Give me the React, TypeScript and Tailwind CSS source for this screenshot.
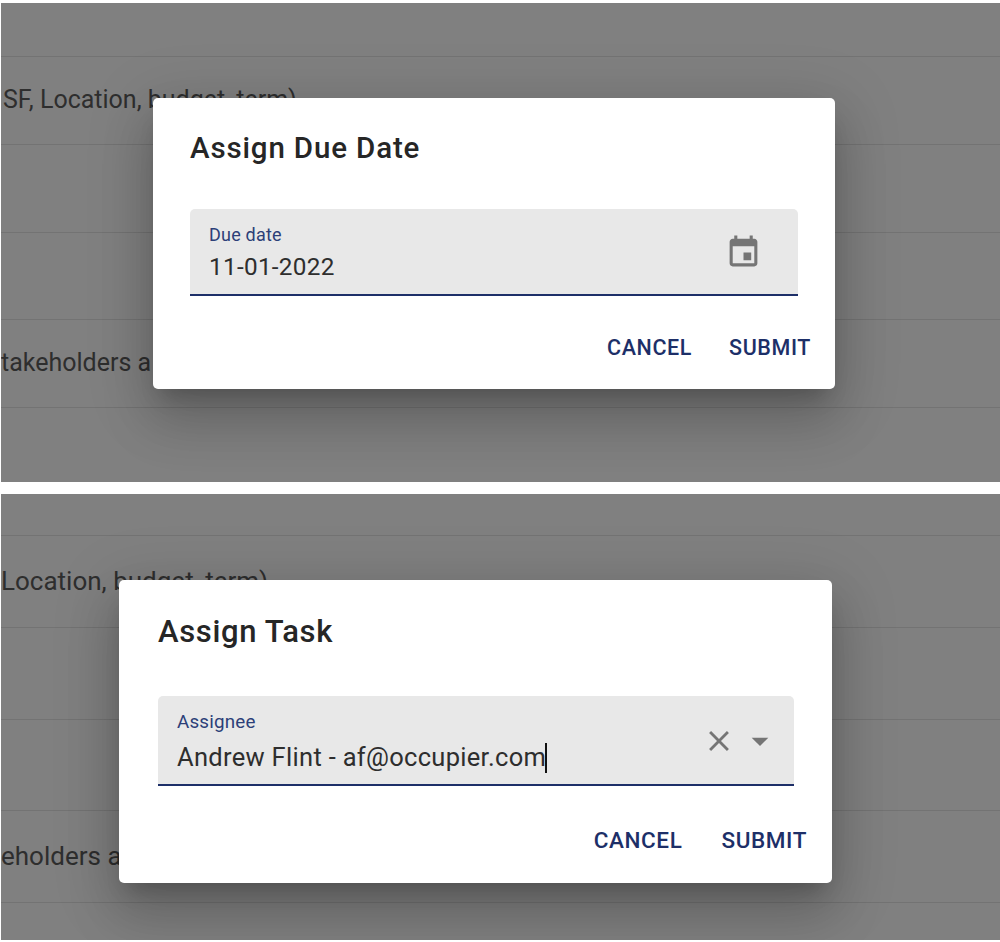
import React from 'react';

const font = { fontFamily: 'Roboto, sans-serif' };

function Rows({ first, height, className, rows }: { first: number; height: number; className: string; rows: { text?: string; x: number }[] }) {
  return (
    <div>
      <div className="border-b border-[#737373]" style={{ height: first }} />
      {rows.map((row, i) => (
        <div
          key={i}
          className={`flex items-center border-b border-[#737373] text-[#2e2e2e] whitespace-nowrap ${className}`}
          style={{ height, paddingLeft: row.x }}
        >
          {row.text}
        </div>
      ))}
    </div>
  );
}

function EventIcon() {
  return (
    <svg width="37" height="37" viewBox="0 0 24 24" fill="#757575">
      <path d="M17 12h-5v5h5v-5zM16 1v2H8V1H6v2H5c-1.11 0-1.99.9-1.99 2L3 19c0 1.1.89 2 2 2h14c1.1 0 2-.9 2-2V5c0-1.1-.9-2-2-2h-1V1h-2zm3 18H5V8h14v11z" />
    </svg>
  );
}

function Actions({ className }: { className: string }) {
  return (
    <div className={`flex justify-end font-medium text-[#1d2f68] ${className}`}>
      <span>CANCEL</span>
      <span>SUBMIT</span>
    </div>
  );
}

export default function App() {
  return (
    <div className="relative h-[942px] w-[1000px] overflow-hidden bg-white" style={font}>
      <div className="relative ml-px mt-[3px] h-[479px] overflow-hidden bg-[#808080]">
        <Rows
          first={54}
          height={87.75}
          className="pb-[2px] text-[25px]"
          rows={[
            { text: 'SF, Location, budget, term)', x: 2 },
            { x: 0 },
            { x: 0 },
            { text: 'takeholders a', x: 0 },
            { x: 0 },
          ]}
        />
        <div className="absolute left-[152px] top-[95px] h-[291px] w-[682px] rounded-[5px] bg-white pl-[37px] pr-[24px] pt-[30px] shadow-[0_15px_20px_-9px_rgba(0,0,0,0.2),0_32px_51px_4px_rgba(0,0,0,0.14),0_12px_62px_11px_rgba(0,0,0,0.12)]">
          <h2 className="text-[29.5px] font-medium leading-[41px] tracking-[0.85px] text-[#262626]">Assign Due Date</h2>
          <div className="mr-[13px] mt-[40px] flex h-[87px] items-start justify-between rounded-t-[5px] border-b-2 border-[#1d2f68] bg-[#e8e8e8] pl-[19px] pr-[36px]">
            <div>
              <div className="mt-[14px] text-[18px] leading-[24px] tracking-[0.2px] text-[#2c3f78]">Due date</div>
              <div className="mt-[4px] text-[24.3px] leading-[32px] tracking-[0.3px] text-[#2e2e2e]">11-01-2022</div>
            </div>
            <div className="mt-[25px]">
              <EventIcon />
            </div>
          </div>
          <div className="mt-[36px]">
            <Actions className="gap-[37px] text-[21.5px] tracking-[0.6px]" />
          </div>
        </div>
      </div>

      <div className="relative ml-px mt-[12px] h-[446px] overflow-hidden bg-[#808080]">
        <Rows
          first={42}
          height={91.75}
          className="text-[26px]"
          rows={[
            { text: 'Location, budget, term)', x: 0 },
            { x: 0 },
            { x: 0 },
            { text: 'eholders a', x: 0 },
            { x: 0 },
          ]}
        />
        <div className="absolute left-[118px] top-[86px] h-[303px] w-[713px] rounded-[5px] bg-white pl-[39px] pr-[25px] pt-[31px] shadow-[0_15px_20px_-9px_rgba(0,0,0,0.2),0_32px_51px_4px_rgba(0,0,0,0.14),0_12px_62px_11px_rgba(0,0,0,0.12)]">
          <h2 className="text-[31px] font-medium leading-[42px] tracking-[0.65px] text-[#262626]">Assign Task</h2>
          <div className="mr-[13px] mt-[43px] flex h-[90px] items-start justify-between rounded-t-[5px] border-b-2 border-[#1d2f68] bg-[#e8e8e8] pl-[19px] pr-[14px]">
            <div>
              <div className="mt-[14px] text-[18.8px] leading-[25px] tracking-[0.2px] text-[#2c3f78]">Assignee</div>
              <div className="mt-[5px] flex text-[25.5px] leading-[34px] tracking-[0.3px] text-[#2e2e2e]">
                Andrew Flint - af@occupier.com
                <span className="ml-[-1px] mt-[3px] h-[30px] w-[2px] bg-[#111]" />
              </div>
            </div>
            <div className="mt-[25px] flex items-center gap-[4px]">
              <svg width="34" height="34" viewBox="0 0 24 24" fill="#757575">
                <path d="M19 6.41 17.59 5 12 10.59 6.41 5 5 6.41 10.59 12 5 17.59 6.41 19 12 13.41 17.59 19 19 17.59 13.41 12z" />
              </svg>
              <svg width="40" height="40" viewBox="0 0 24 24" fill="#757575">
                <path d="M7 10l5 5 5-5z" />
              </svg>
            </div>
          </div>
          <div className="mt-[38px]">
            <Actions className="gap-[39px] text-[22.5px] tracking-[0.6px]" />
          </div>
        </div>
      </div>
    </div>
  );
}
